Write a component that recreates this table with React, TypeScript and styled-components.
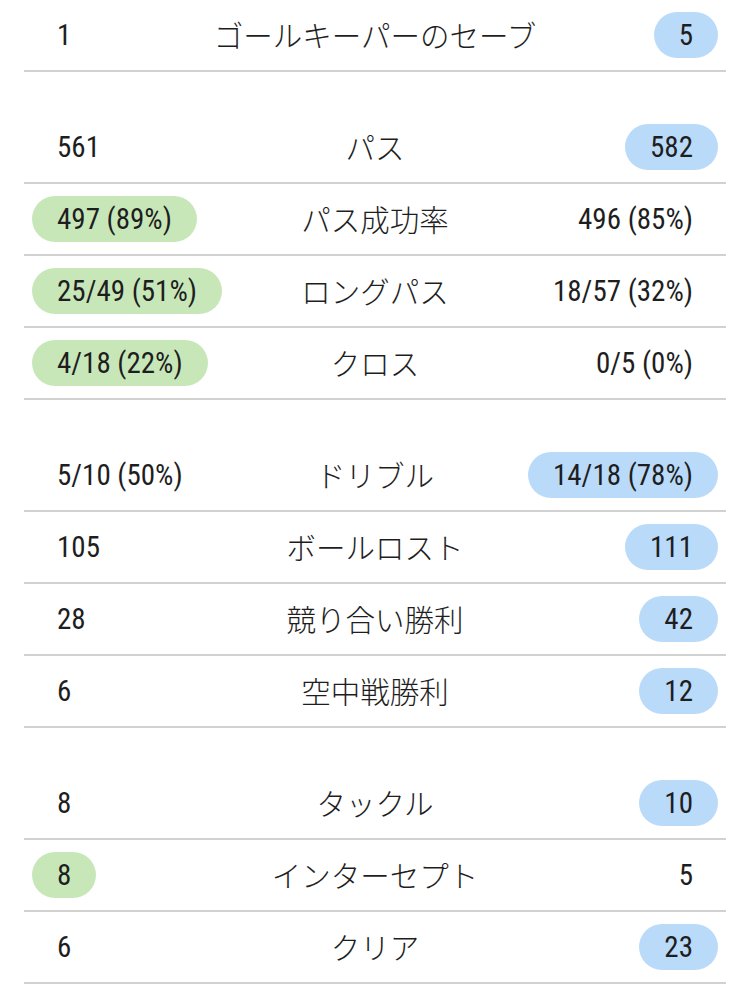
import React from 'react'
import styled, { createGlobalStyle } from 'styled-components'

const GlobalStyle = createGlobalStyle`
    body {
        margin: 0;
        background: #ffffff;
        font-family: Roboto, "Noto Sans CJK JP", sans-serif;
        color: #212121;
    }
`

type Side = 'left' | 'right'

type Stat = {
    home: string
    label: string
    away: string
    best: Side
}

const groups: Stat[][] = [
    [{ home: '1', label: 'ゴールキーパーのセーブ', away: '5', best: 'right' }],
    [
        { home: '561', label: 'パス', away: '582', best: 'right' },
        { home: '497 (89%)', label: 'パス成功率', away: '496 (85%)', best: 'left' },
        { home: '25/49 (51%)', label: 'ロングパス', away: '18/57 (32%)', best: 'left' },
        { home: '4/18 (22%)', label: 'クロス', away: '0/5 (0%)', best: 'left' },
    ],
    [
        { home: '5/10 (50%)', label: 'ドリブル', away: '14/18 (78%)', best: 'right' },
        { home: '105', label: 'ボールロスト', away: '111', best: 'right' },
        { home: '28', label: '競り合い勝利', away: '42', best: 'right' },
        { home: '6', label: '空中戦勝利', away: '12', best: 'right' },
    ],
    [
        { home: '8', label: 'タックル', away: '10', best: 'right' },
        { home: '8', label: 'インターセプト', away: '5', best: 'left' },
        { home: '6', label: 'クリア', away: '23', best: 'right' },
    ],
]

const Page = styled.div`
    display: flex;
    flex-direction: column;
    gap: 40px;
`

const Group = styled.section`
    display: flex;
    flex-direction: column;
`

const Row = styled.div`
    display: grid;
    grid-template-columns: 1fr auto 1fr;
    align-items: center;
    height: 70px;
    margin: 0 24px;
    padding: 0 8px;
    border-bottom: 2px solid #d2d2d2;
`

const Label = styled.div`
    font-family: "Noto Sans CJK JP", sans-serif;
    font-size: 29.5px;
    font-weight: 300;
    color: #1e1e1e;
    text-align: center;
    white-space: nowrap;
    margin-top: -3px;
`

const Value = styled.span<{ $side: Side; $best: boolean; $tone: 'green' | 'blue' }>`
    justify-self: ${(p) => (p.$side === 'left' ? 'start' : 'end')};
    display: inline-flex;
    align-items: center;
    height: 46px;
    padding: 0 25px;
    border-radius: 23px;
    background: ${(p) => (p.$best ? (p.$tone === 'green' ? '#c8e7b9' : '#badafa') : 'transparent')};
    font-family: Roboto, sans-serif;
    font-stretch: 87%;
    font-size: 29px;
    color: #1e1e1e;
    white-space: nowrap;
`

const StatRow: React.FC<{ stat: Stat }> = ({ stat }) => (
    <Row>
        <Value $side="left" $best={stat.best === 'left'} $tone="green">
            {stat.home}
        </Value>
        <Label>{stat.label}</Label>
        <Value $side="right" $best={stat.best === 'right'} $tone="blue">
            {stat.away}
        </Value>
    </Row>
)

export default function App() {
    return (
        <>
            <GlobalStyle />
            <Page>
                {groups.map((group, i) => (
                    <Group key={i}>
                        {group.map((stat, j) => (
                            <StatRow stat={stat} key={j} />
                        ))}
                    </Group>
                ))}
            </Page>
        </>
    )
}
